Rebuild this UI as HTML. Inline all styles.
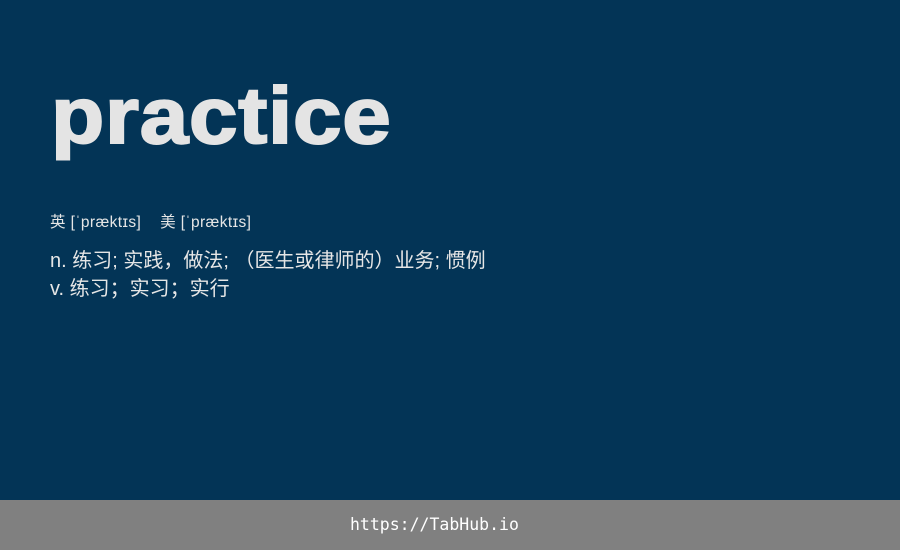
<!DOCTYPE html>
<html><head><meta charset="utf-8"><style>
html,body{margin:0;padding:0;}
body{width:900px;height:550px;background:#033456;position:relative;overflow:hidden;font-family:"Liberation Sans","Noto Sans CJK SC",sans-serif;color:#e6e6e6;}
.t{position:absolute;left:51px;top:76px;font-size:80px;font-weight:bold;line-height:80px;color:#e4e4e4;-webkit-text-stroke:2px #e4e4e4;letter-spacing:0.7px;transform:scaleX(1.09);transform-origin:0 0;white-space:nowrap;}
.ph{position:absolute;left:50px;top:213px;font-size:15.5px;line-height:20px;letter-spacing:0.4px;}
.d{position:absolute;left:50px;top:247px;font-size:20px;line-height:28px;letter-spacing:0px;}
.f{position:absolute;left:350px;top:500px;height:50px;color:#fff;font-family:"DejaVu Sans Mono",monospace;font-size:16.5px;line-height:50px;}
.bar{position:absolute;left:0;top:500px;width:900px;height:50px;background:#808080;}
</style></head><body>
<div class="t">practice</div>
<div class="ph">英 [ˈpræktɪs]&nbsp;&nbsp;&nbsp;&nbsp;美 [ˈpræktɪs]</div>
<div class="d">n. 练习; 实践，做法; （医生或律师的）业务; 惯例<br>v. 练习；实习；实行</div>
<div class="bar"></div>
<div class="f">https://TabHub.io</div>
</body></html>
